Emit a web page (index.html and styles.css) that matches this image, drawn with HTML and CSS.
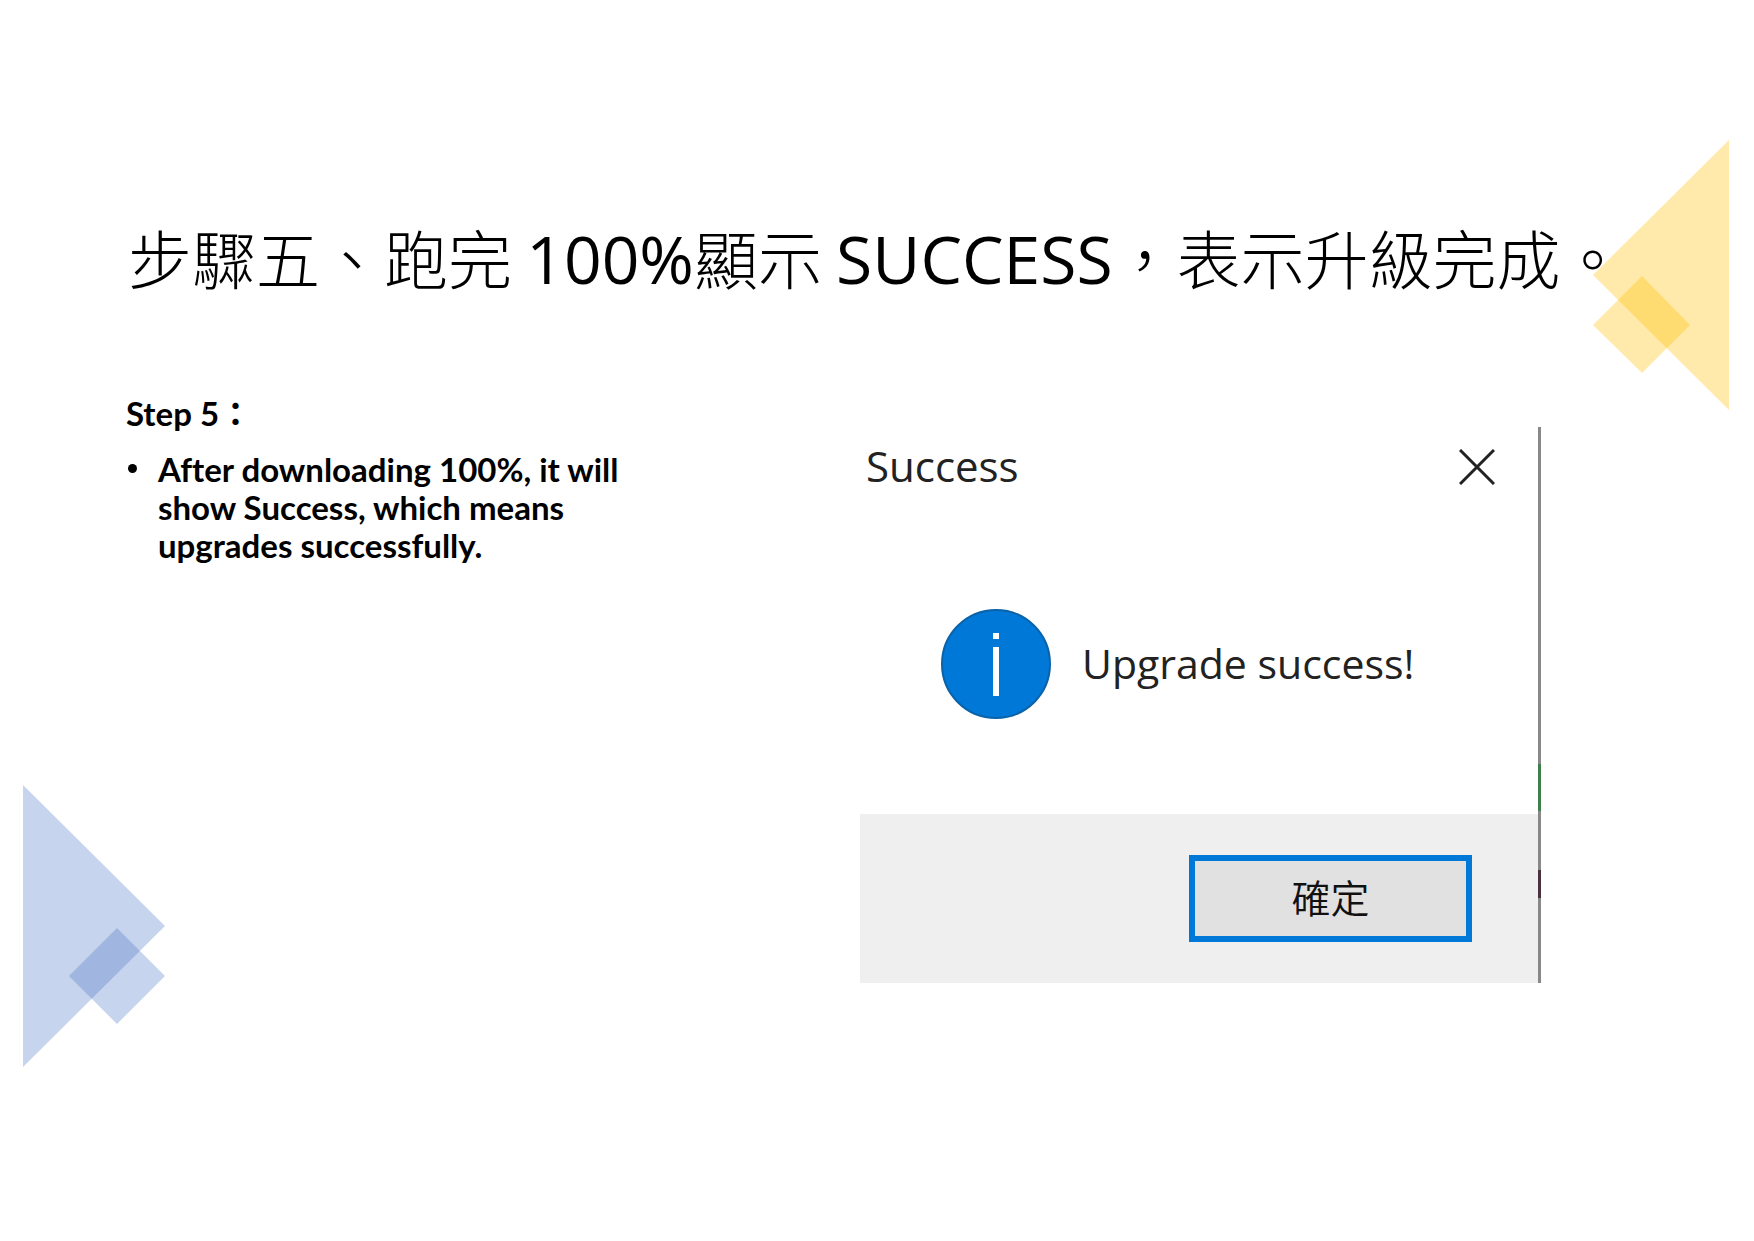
FILE: index.html
```html
<!DOCTYPE html>
<html lang="zh-TW">
<head>
<meta charset="utf-8">
<title>Step 5</title>
<link rel="stylesheet" href="styles.css">
</head>
<body>
<main class="slide">
  <svg class="decor decor-right" viewBox="0 0 136 270" aria-hidden="true">
    <path d="M136 0V270L0 135Z"/>
    <path d="M49 136L97 185L49 233L0 185Z"/>
  </svg>
  <svg class="decor decor-left" viewBox="0 0 142 282" aria-hidden="true">
    <path d="M0 0V282L142 141Z"/>
    <path d="M94 143L142 191L94 239L46 191Z"/>
  </svg>
  <h1 class="title">步驟五、跑完 <span class="latin">100%</span>顯示 <span class="latin">SUCCESS</span>，表示升級完成。</h1>
  <div class="content">
    <section class="steps" lang="en">
      <p class="step-name">Step 5<span class="colon" lang="zh-TW">：</span></p>
      <ul class="step-list">
        <li class="step-item">After downloading 100%, it will show Success, which means upgrades successfully.</li>
      </ul>
    </section>
    <section class="dialog" role="dialog" aria-labelledby="dialog-title">
      <div class="dialog-main">
        <header class="dialog-header">
          <h2 class="dialog-title" id="dialog-title">Success</h2>
          <button class="close" type="button" aria-label="Close">
            <svg class="close-icon" viewBox="0 0 36 36" aria-hidden="true"><path d="M1 1L35 35M35 1L1 35"/></svg>
          </button>
        </header>
        <div class="message">
          <svg class="info" viewBox="0 0 110 110" aria-hidden="true">
            <circle cx="55" cy="55" r="54"/>
            <path d="M52 24h6v6h-6zM52 38h6v49h-6z"/>
          </svg>
          <p class="message-text">Upgrade success!</p>
        </div>
        <footer class="dialog-footer">
          <button class="ok" type="button">確定</button>
        </footer>
      </div>
      <div class="edge"></div>
    </section>
  </div>
</main>
</body>
</html>
```
FILE: styles.css
```css
* {
  box-sizing: border-box;
}

body {
  margin: 0;
  background: #fff;
  color: #000;
  font-family: "Open Sans", "Noto Sans CJK TC", sans-serif;
}

.slide {
  position: relative;
  min-height: 100vh;
  padding: 208px 213px 0 126px;
}

.decor {
  position: absolute;
  z-index: -1;
}

.decor-right {
  top: 140px;
  right: 25px;
  width: 136px;
  fill: #ffc000;
  fill-opacity: 0.33;
}

.decor-left {
  top: 785px;
  left: 23px;
  width: 142px;
  fill: #4472c4;
  fill-opacity: 0.3;
}

.title {
  margin: 0;
  padding-left: 2px;
  font-family: "Noto Sans CJK TC", sans-serif;
  font-size: 64px;
  font-weight: 300;
  line-height: 96px;
  white-space: nowrap;
}

.latin {
  font-family: "Open Sans", sans-serif;
  font-size: 66px;
  font-weight: 400;
  line-height: 1;
}

.content {
  display: flex;
  justify-content: space-between;
  align-items: flex-start;
  padding-top: 90px;
}

.steps {
  width: 520px;
  font-family: Lato, "Noto Sans CJK TC", sans-serif;
  font-size: 33px;
  font-weight: 700;
  font-variant-ligatures: none;
  line-height: 38px;
}

.step-name {
  margin: 0 0 18px;
}

.colon {
  font-family: "Noto Sans CJK TC", sans-serif;
  line-height: 1;
}

.step-list {
  margin: 0;
  padding: 0;
  list-style: none;
}

.step-item {
  display: flex;
}

.step-item::before {
  content: "";
  flex: none;
  width: 9px;
  height: 9px;
  margin: 14px 21px 0 2px;
  border-radius: 50%;
  background: #000;
}

.dialog {
  display: flex;
  width: 681px;
  margin-top: 33px;
}

.dialog-main {
  flex: 1;
}

.dialog-header {
  display: flex;
  justify-content: space-between;
  align-items: center;
  padding: 10px 43px 0 6px;
}

.dialog-title,
.message-text {
  margin: 0;
  padding-bottom: 2px;
  color: #222;
  font-size: 42px;
  font-weight: 400;
  line-height: 58px;
}

.message-text {
  font-size: 41px;
}

.close {
  display: flex;
  padding: 0;
  border: 0;
  background: none;
}

.close-icon {
  width: 36px;
  fill: none;
  stroke: #222;
  stroke-width: 3;
}

.message {
  display: flex;
  align-items: center;
  gap: 31px;
  padding: 112px 0 95px 81px;
}

.info {
  width: 110px;
  fill: #0078d7;
}

.info circle {
  stroke: #0a62a8;
  stroke-width: 2;
}

.info path {
  fill: #fff;
}

.dialog-footer {
  display: flex;
  justify-content: flex-end;
  padding: 41px 66px;
  background: #efefef;
}

.ok {
  width: 283px;
  height: 87px;
  padding: 0 0 6px;
  border: 6px solid #0078d7;
  background: #e1e1e1;
  color: #111;
  font-family: "Noto Sans CJK TC", sans-serif;
  font-size: 39px;
  font-weight: 350;
}

.edge {
  width: 3px;
  background: linear-gradient(#888 0 337px, #3f7f4c 337px 384px, #888 384px 443px, #4a3040 443px 471px, #888 471px);
}
```
